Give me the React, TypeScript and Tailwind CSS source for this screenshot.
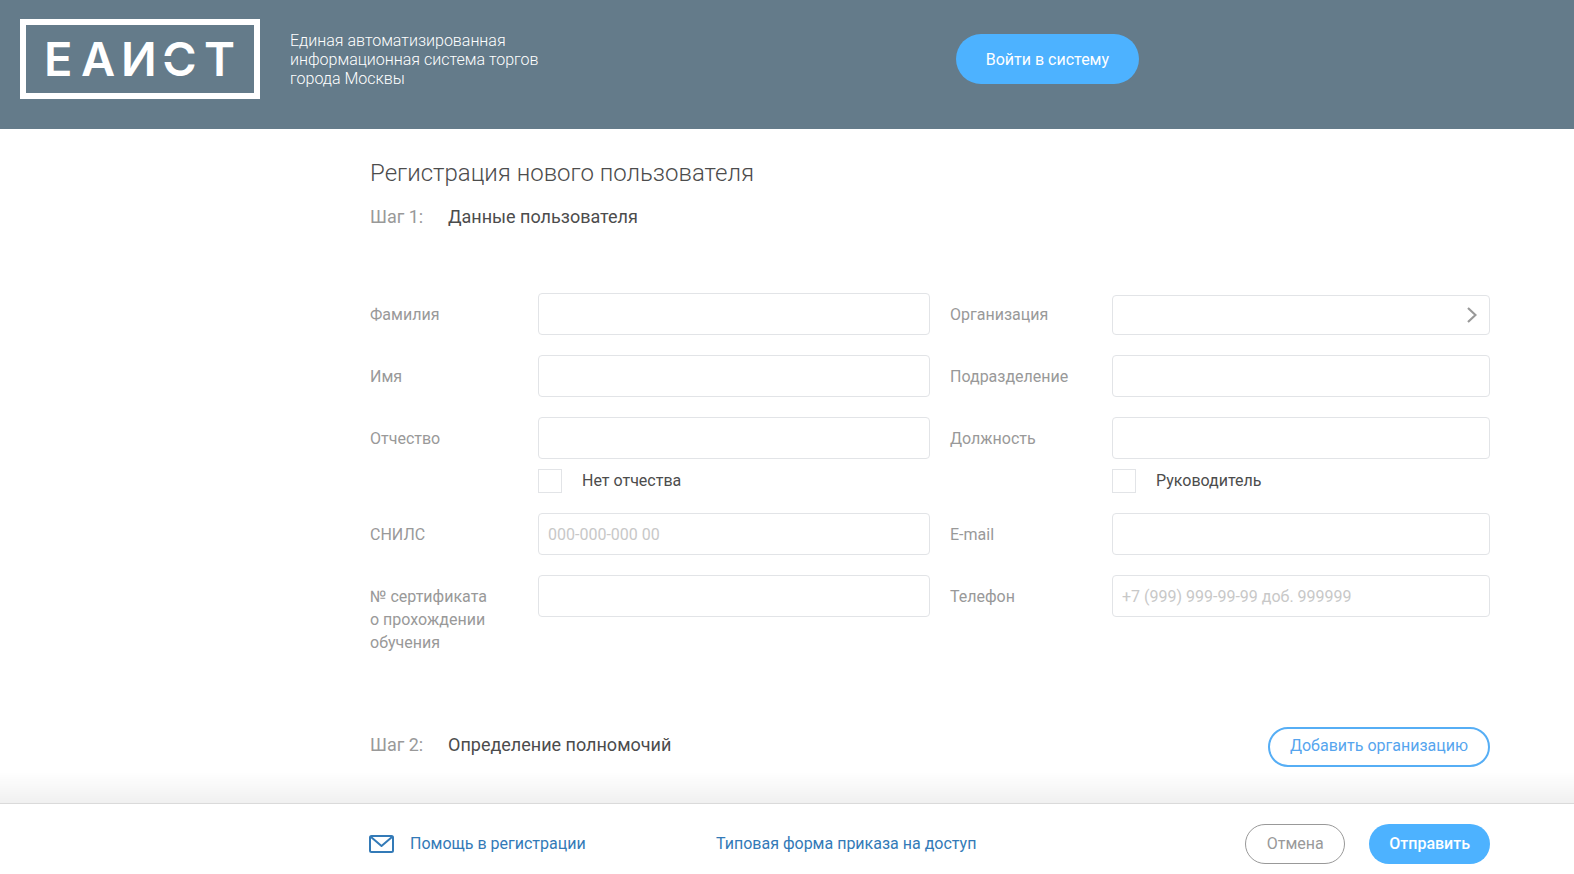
import type { ReactNode } from "react"

const inputClass = "block h-[42px] w-full rounded border border-[#e2e4e7] bg-white px-[9px] text-base text-[#4c4c4c] placeholder:text-[#c8c8c8] outline-none focus:border-[#4db2ff]"

function Logo(){
    return(
        <a href="/" aria-label="ЕАИСТ" className="block h-20 w-60 shrink-0 border-[6px] border-white">
            <svg viewBox="0 0 228 68" className="block h-full w-full">
                <text
                    x="18 55 95 136 178"
                    y="51"
                    fill="#fff"
                    fontSize="47"
                    fontWeight="600"
                    fontFamily="Inter, 'Open Sans', sans-serif"
                >ЕАИСТ</text>
                <rect x="136" y="31" width="14" height="6" fill="#647b8a" />
            </svg>
        </a>
    )
}

function Field({ id, label, placeholder, type = "text", children }: { id: string; label: string; placeholder?: string; type?: string; children?: ReactNode }){
    return(
        <div className="grid grid-cols-[3fr_7fr]">
            <label htmlFor={id} className="pt-2.5 pr-10 text-base leading-[23px] text-[#999]">{label}</label>
            <div>
                <input id={id} type={type} placeholder={placeholder} className={inputClass} />
                {children}
            </div>
        </div>
    )
}

function Check({ id, label }: { id: string; label: string }){
    return(
        <div className="mt-2.5 flex h-6 items-center gap-5">
            <input id={id} type="checkbox" className="size-6 appearance-none border border-[#e2e4e7] bg-white checked:bg-[#4db2ff]" />
            <label htmlFor={id} className="text-base text-[#4c4c4c]">{label}</label>
        </div>
    )
}

function OrganizationField(){
    return(
        <div className="grid grid-cols-[3fr_7fr]">
            <label htmlFor="organization" className="pt-2.5 text-base leading-[23px] text-[#999]">Организация</label>
            <div className="flex h-[42px] items-end">
                <div className="flex h-10 w-full items-center rounded border border-[#e2e4e7] bg-white">
                    <input id="organization" type="text" className="h-full min-w-0 flex-1 px-[9px] text-base text-[#4c4c4c] outline-none" />
                    <button type="button" aria-label="Выбрать организацию" className="flex h-full w-[34px] items-center justify-center">
                        <svg viewBox="0 0 10 16" className="h-4 w-2.5" fill="none" stroke="#999" strokeWidth="2.200">
                            <path d="M1 1l7.500 7L1 15" />
                        </svg>
                    </button>
                </div>
            </div>
        </div>
    )
}

function Step({ step, title }: { step: string; title: string }){
    return(
        <h2 className="flex text-lg leading-7 text-[#4c4c4c]">
            <span className="w-[78px] text-[#999]">{step}</span>
            {title}
        </h2>
    )
}

export default function App(){
    return(
        <div className="min-h-screen bg-white font-[Roboto,sans-serif] text-base">
            <header className="flex h-[129px] items-start bg-[#647b8a] px-5 pt-[19px]">
                <div className="flex w-[61%] gap-[30px]">
                    <Logo />
                    <p className="w-[260px] pt-3 leading-[19px] font-light text-white">Единая автоматизированная информационная система торгов города Москвы</p>
                </div>
                <button type="button" className="mt-[15px] h-[50px] rounded-full bg-[#4db2ff] px-[30px] pt-0.5 text-white">Войти в систему</button>
            </header>

            <main className="pt-7 pr-[84px] pb-[100px] pl-[370px]">
                <h1 className="text-2xl font-light text-[#4c4c4c]">Регистрация нового пользователя</h1>
                <div className="mt-3.5">
                    <Step step="Шаг 1:" title="Данные пользователя" />
                </div>

                <form id="registration" className="mt-[62px] grid grid-cols-2">
                    <div className="flex flex-col gap-5">
                        <Field id="surname" label="Фамилия" />
                        <Field id="name" label="Имя" />
                        <Field id="patronymic" label="Отчество">
                            <Check id="no-patronymic" label="Нет отчества" />
                        </Field>
                        <Field id="snils" label="СНИЛС" placeholder="000-000-000 00" />
                        <Field id="certificate" label="№ сертификата о прохождении обучения" />
                    </div>
                    <div className="flex flex-col gap-5 pl-5">
                        <OrganizationField />
                        <Field id="department" label="Подразделение" />
                        <Field id="position" label="Должность">
                            <Check id="head" label="Руководитель" />
                        </Field>
                        <Field id="email" label="E-mail" type="email" />
                        <Field id="phone" label="Телефон" type="tel" placeholder="+7 (999) 999-99-99 доб. 999999" />
                    </div>
                </form>

                <div className="mt-[73px] flex items-start justify-between">
                    <div className="pt-1">
                        <Step step="Шаг 2:" title="Определение полномочий" />
                    </div>
                    <button type="button" className="h-10 rounded-full border-2 border-[#56aef5] px-5 pb-0.5 text-[#56a5ee]">Добавить организацию</button>
                </div>
            </main>

            <footer className="fixed inset-x-0 bottom-0 flex items-center border-t border-[#e8e8e8] bg-white pt-5 pr-[84px] pb-2.5 pl-[370px]">
                <div className="pointer-events-none absolute inset-x-0 bottom-full h-8 bg-gradient-to-t from-black/6 to-transparent" />
                <a href="#help" className="flex w-[346px] items-center gap-4 text-[#337ab7]">
                    <svg viewBox="0 0 25 18" className="-ml-px h-[18px] w-[25px]" fill="none" stroke="#337ab7" strokeWidth="2" strokeLinejoin="round">
                        <rect x="1" y="1" width="23" height="16" rx="1.500" />
                        <path d="M2 2l10.500 9L23 2" />
                    </svg>
                    Помощь в регистрации
                </a>
                <a href="#order-form" className="text-[#337ab7]">Типовая форма приказа на доступ</a>
                <div className="ml-auto flex gap-6">
                    <button type="button" className="h-10 w-[100px] rounded-full border border-[#999] text-[#999]">Отмена</button>
                    <button type="submit" form="registration" className="h-10 rounded-full bg-[#4db2ff] px-5 font-medium text-white">Отправить</button>
                </div>
            </footer>
        </div>
    )
}
